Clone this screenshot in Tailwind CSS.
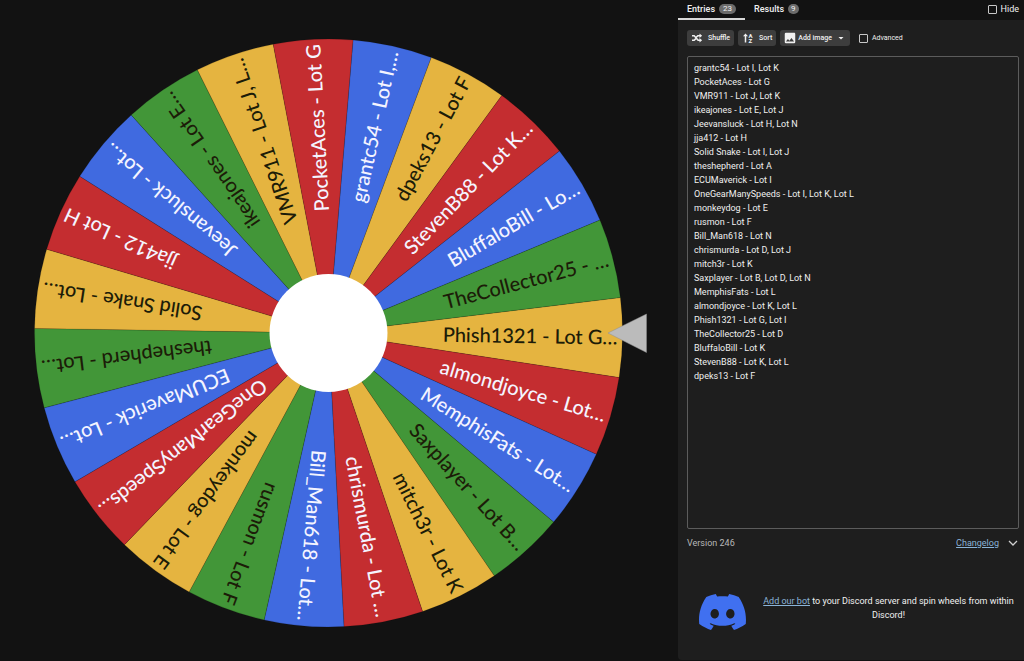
<!DOCTYPE html>
<html lang="en">

<head>
    <meta charset="UTF-8">
    <meta name="viewport" content="width=device-width, initial-scale=1.0">
    <title>Wheel</title>
    <script src="https://cdn.jsdelivr.net/npm/@tailwindcss/browser@4"></script>
</head>

<body class="bg-[#121212] min-h-screen flex font-['Roboto',sans-serif] text-[9px] leading-[14px] text-[#f0f0f0]">
    <!-- Wheel -->
    <main class="flex-1 min-w-0 flex items-center">
        <svg viewBox="0 0 678 661" class="w-full h-auto" role="img" aria-label="Wheel">
            <g id="wheel" class="font-['Lato',sans-serif] text-[20px] font-medium"></g>
            <circle cx="328.5" cy="333" r="59" fill="#fff" />
            <path d="M608 333L646.500 314V352.500Z" fill="#bbb" stroke="#8f8f8f" stroke-width=".5" />
        </svg>
    </main>

    <!-- Side panel -->
    <aside class="w-[346px] shrink-0 min-h-screen flex flex-col pb-px">
        <div class="h-5 flex items-stretch pr-[5px]">
            <button class="flex items-center gap-1 px-[9px] font-medium border-b-2 border-[#d8d8d8]">
                Entries
                <span class="bg-[#6b6b6b] rounded-full px-1 text-[8px] leading-[10px] font-normal">23</span>
            </button>
            <button class="flex items-center gap-1 px-[9px] pb-[2px] font-medium">
                Results
                <span class="bg-[#6b6b6b] rounded-full px-[3px] text-[8px] leading-[10px] font-normal">9</span>
            </button>
            <label class="ml-auto flex items-center gap-1 pb-[2px]">
                <input type="checkbox" class="appearance-none size-[9px] border border-[#c8c8c8] rounded-[1px]">
                Hide
            </label>
        </div>

        <div class="flex-1 flex flex-col bg-[#1e1e1e] rounded-bl-sm pl-[9px] pr-[5px] pt-[10px]">
            <!-- Toolbar -->
            <div class="flex items-center gap-1 text-[7px] leading-4">
                <button class="h-4 flex items-center gap-[5px] bg-[#3d3d3d] rounded-[3px] px-1 font-medium">
                    <svg viewBox="0 0 24 24" class="size-3" fill="currentColor">
                        <path d="M17 3L22.250 7.500L17 12V9H14.260L11.440 11.830L9.320 9.710L13 6H17ZM2 6H7L15 15H17V12L22.250 16.500L17 21V18H13.500L5.740 9H2ZM2 15H5.740L8.570 12.170L10.690 14.290L7 18H2Z" />
                    </svg>
                    Shuffle
                </button>
                <button class="h-4 flex items-center gap-[5px] bg-[#3d3d3d] rounded-[3px] px-1 font-medium">
                    <svg viewBox="0 0 24 24" class="size-3" fill="currentColor">
                        <path d="M7 3L12 8.500H8.500V21H5.500V8.500H2Z" />
                        <text x="13" y="12" font-size="12" font-weight="700">A</text>
                        <text x="13" y="22" font-size="12" font-weight="700">Z</text>
                    </svg>
                    Sort
                </button>
                <button class="h-4 flex items-center gap-px bg-[#3d3d3d] rounded-[3px] px-[3px] font-medium">
                    <svg viewBox="0 0 24 24" class="size-[14px]" fill="currentColor">
                        <path d="M8.500 13.500L11 16.500L14.500 12L19 18H5M21 19V5C21 3.890 20.100 3 19 3H5A2 2 0 0 0 3 5V19A2 2 0 0 0 5 21H19A2 2 0 0 0 21 19Z" />
                    </svg>
                    Add image
                    <svg viewBox="0 0 24 24" class="size-3 ml-[2px]" fill="currentColor">
                        <path d="M7 10L12 15L17 10Z" />
                    </svg>
                </button>
                <label class="flex items-center gap-1 ml-[5px]">
                    <input type="checkbox" class="appearance-none size-[9px] border border-[#c8c8c8] rounded-[1px]">
                    Advanced
                </label>
            </div>

            <!-- Entries -->
            <textarea aria-label="Entries" spellcheck="false"
                class="block w-full h-[473px] mt-[10px] px-[6px] py-1 resize-none outline-none bg-transparent border border-[#5c5c5c] rounded-[2px]">grantc54 - Lot I, Lot K
PocketAces - Lot G
VMR911 - Lot J, Lot K
ikeajones - Lot E, Lot J
Jeevansluck - Lot H, Lot N
jja412 - Lot H
Solid Snake - Lot I, Lot J
theshepherd - Lot A
ECUMaverick - Lot I
OneGearManySpeeds - Lot I, Lot K, Lot L
monkeydog - Lot E
rusmon - Lot F
Bill_Man618 - Lot N
chrismurda - Lot D, Lot J
mitch3r - Lot K
Saxplayer - Lot B, Lot D, Lot N
MemphisFats - Lot L
almondjoyce - Lot K, Lot L
Phish1321 - Lot G, Lot I
TheCollector25 - Lot D
BluffaloBill - Lot K
StevenB88 - Lot K, Lot L
dpeks13 - Lot F</textarea>

            <!-- Version -->
            <div class="flex items-center mt-[7px]">
                <span class="text-[#b8b8b8]">Version 246</span>
                <a href="#changelog" class="ml-auto mr-2 text-[#8ab4d8] underline">Changelog</a>
                <button aria-label="Show changelog">
                    <svg viewBox="0 0 24 24" class="size-3" fill="none" stroke="#d0d0d0" stroke-width="2.500">
                        <path d="M4 8L12 16L20 8" />
                    </svg>
                </button>
            </div>

            <!-- Discord -->
            <div class="flex items-start gap-3 pl-3 mt-11">
                <svg viewBox="0 2.800 24 18.400" class="w-[47px] h-9 shrink-0" fill="#4070f0">
                    <path d="M20.317 4.3698a19.7913 19.7913 0 00-4.8851-1.5152.0741.0741 0 00-.0785.0371c-.211.3753-.4447.8648-.6083 1.2495-1.8447-.2762-3.68-.2762-5.4868 0-.1636-.3933-.4058-.8742-.6177-1.2495a.077.077 0 00-.0785-.037 19.7363 19.7363 0 00-4.8852 1.515.0699.0699 0 00-.0321.0277C.5334 9.0458-.319 13.5799.0992 18.0578a.0824.0824 0 00.0312.0561c2.0528 1.5076 4.0413 2.4228 5.9929 3.0294a.0777.0777 0 00.0842-.0276c.4616-.6304.8731-1.2952 1.226-1.9942a.076.076 0 00-.0416-.1057c-.6528-.2476-1.2743-.5495-1.8722-.8923a.077.077 0 01-.0076-.1277c.1258-.0943.2517-.1923.3718-.2914a.0743.0743 0 01.0776-.0105c3.9278 1.7933 8.18 1.7933 12.0614 0a.0739.0739 0 01.0785.0095c.1202.099.246.1981.3728.2924a.077.077 0 01-.0066.1276 12.2986 12.2986 0 01-1.873.8914.0766.0766 0 00-.0407.1067c.3604.698.7719 1.3628 1.225 1.9932a.076.076 0 00.0842.0286c1.961-.6067 3.9495-1.5219 6.0023-3.0294a.077.077 0 00.0313-.0552c.5004-5.177-.8382-9.6739-3.5485-13.6604a.061.061 0 00-.0312-.0286zM8.02 15.3312c-1.1825 0-2.1569-1.0857-2.1569-2.419 0-1.3332.9555-2.4189 2.157-2.4189 1.2108 0 2.1757 1.0952 2.1568 2.419 0 1.3332-.9555 2.4189-2.1569 2.4189zm7.9748 0c-1.1825 0-2.1569-1.0857-2.1569-2.419 0-1.3332.9554-2.4189 2.1569-2.4189 1.2108 0 2.1757 1.0952 2.1568 2.419 0 1.3332-.946 2.4189-2.1568 2.4189Z" />
                </svg>
                <p class="flex-1 text-center">
                    <a href="#bot" class="text-[#8ab4d8] underline">Add our bot</a> to your Discord server and spin wheels from within Discord!
                </p>
            </div>
        </div>
    </aside>

    <script>
        const YELLOW = '#e5b440', RED = '#c42d30', BLUE = '#406ae0', GREEN = '#429638';

        // Slices clockwise, starting at the pointer
        const slices = [
            ['Phish1321 - Lot G…', YELLOW],
            ['almondjoyce - Lot…', RED],
            ['MemphisFats - Lot…', BLUE],
            ['Saxplayer - Lot B…', GREEN],
            ['mitch3r - Lot K', YELLOW],
            ['chrismurda - Lot …', RED],
            ['Bill_Man618 - Lot…', BLUE],
            ['rusmon - Lot F', GREEN],
            ['monkeydog - Lot E', YELLOW],
            ['OneGearManySpeeds…', RED],
            ['ECUMaverick - Lot…', BLUE],
            ['theshepherd - Lot…', GREEN],
            ['Solid Snake - Lot…', YELLOW],
            ['jja412 - Lot H', RED],
            ['Jeevansluck - Lot…', BLUE],
            ['ikeajones - Lot E…', GREEN],
            ['VMR911 - Lot J, L…', YELLOW],
            ['PocketAces - Lot G', RED],
            ['grantc54 - Lot I,…', BLUE],
            ['dpeks13 - Lot F', YELLOW],
            ['StevenB88 - Lot K…', RED],
            ['BluffaloBill - Lo…', BLUE],
            ['TheCollector25 - …', GREEN]
        ];

        const cx = 328.5, cy = 333, radius = 294, offset = 0.9;
        const step = 360 / slices.length;
        const half = step / 2 * Math.PI / 180;
        const x = radius * Math.cos(half), y = radius * Math.sin(half);

        document.getElementById('wheel').innerHTML = slices.map(([label, color], i) => {
            const textColor = color === RED || color === BLUE ? '#f4f4ff' : '#1c1c08';
            return `<g transform="translate(${cx} ${cy}) rotate(${offset + i * step})">
                <path d="M0 0L${x} ${-y}A${radius} ${radius} 0 0 1 ${x} ${y}Z" fill="${color}" stroke="#000" stroke-opacity=".25" stroke-width=".5" />
                <text x="289" y="7" text-anchor="end" xml:space="preserve" fill="${textColor}">${label}</text>
            </g>`;
        }).join('');
    </script>
</body>

</html>
